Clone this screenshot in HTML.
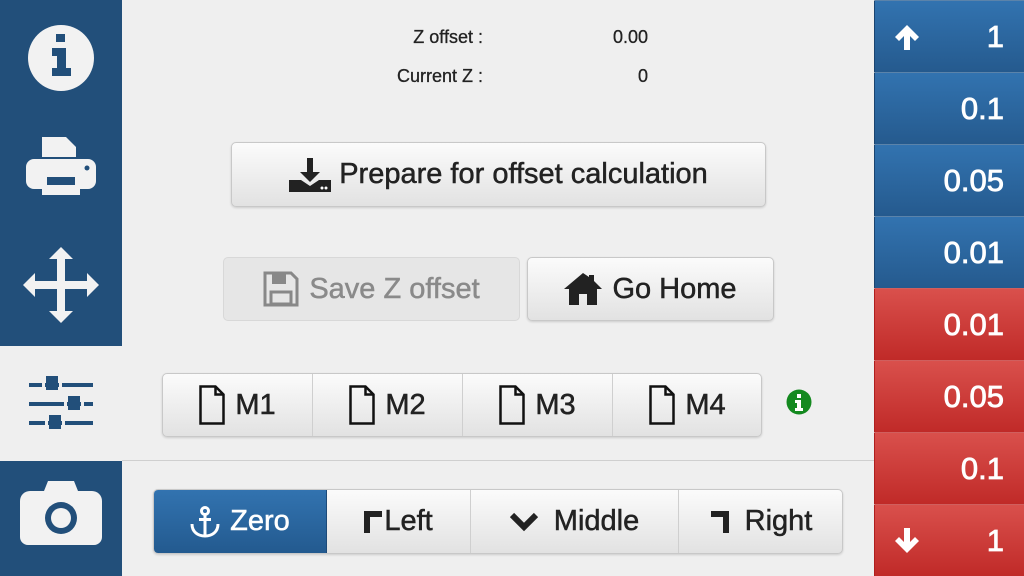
<!DOCTYPE html>
<html><head><meta charset="utf-8"><style>
*{box-sizing:border-box;margin:0;padding:0}
body{width:1024px;height:576px;overflow:hidden;background:#efefef;font-family:"Liberation Sans","DejaVu Sans",sans-serif;position:relative}
.abs{position:absolute}
.side{left:0;top:0;width:122px;height:576px;background:#224f7a}
.act{left:0;top:346px;width:122px;height:115px;background:#efefef}
.sep{left:122px;top:460px;width:752px;height:1px;background:#cfcfcf}
.btn{position:absolute;background:linear-gradient(#fbfbfb,#e2e2e2);border:1px solid #c8c8c8;border-radius:5px;display:flex;align-items:center;justify-content:center;font-size:29px;color:#222;box-shadow:0 1px 2px rgba(0,0,0,.15);-webkit-text-stroke:0.5px}
.seg{position:absolute;display:flex;align-items:center;justify-content:center;font-size:29px;color:#222;border-right:1px solid #cfcfcf;height:100%;top:0}
.r{position:absolute;right:0;width:150px;height:72px;color:#fff;font-size:31px;display:flex;align-items:center;justify-content:flex-end;padding-right:20px;border-left:1px solid #1a4470;border-top:1px solid rgba(255,255,255,.25);-webkit-text-stroke:0.8px}
.b{background:linear-gradient(#3273b0,#255a8e)}
.rd{background:linear-gradient(#d9504c,#c02a28);border-left-color:#b01e1e}
.lbl{font-size:18px;color:#222;-webkit-text-stroke:0.3px}
</style></head><body>
<div class="abs side"></div>
<div class="abs act"></div>
<div class="abs sep"></div>
<svg class="abs" style="left:28px;top:25px" width="66" height="66" viewBox="0 0 66 66"><circle cx="33" cy="33" r="33" fill="#f2f2f2"/><rect x="28" y="9" width="9" height="8" fill="#224f7a"/><path d="M24 23h14v20h5v8H24v-8h5V31h-5z" fill="#224f7a"/></svg>
<svg class="abs" style="left:25px;top:133px" width="72" height="66" viewBox="0 0 72 62"><path d="M17 2h24l10 10v10H17z" fill="#f2f2f2"/><rect x="1" y="24" width="70" height="30" rx="8" fill="#f2f2f2"/><rect x="17" y="46" width="38" height="14" fill="#f2f2f2"/><rect x="22" y="42" width="28" height="8" fill="#224f7a"/><circle cx="62" cy="33" r="2.5" fill="#224f7a"/></svg>
<svg class="abs" style="left:23px;top:247px" width="76" height="76" viewBox="0 0 76 76"><path d="M38 0l12 12h-8v22h22v-8l12 12-12 12v-8H42v22h8L38 76 26 64h8V42H12v8L0 38l12-12v8h22V12h-8z" fill="#f2f2f2"/></svg>
<svg class="abs" style="left:28px;top:372px" width="66" height="62" viewBox="0 0 66 62"><g fill="#224f7a"><rect x="1" y="11" width="64" height="4"/><rect x="1" y="30" width="64" height="4"/><rect x="1" y="49" width="64" height="4"/><rect x="18" y="4" width="12" height="14"/><rect x="40" y="24" width="12" height="14"/><rect x="21" y="43" width="12" height="14"/></g><g fill="#efefef"><rect x="14" y="11" width="3" height="4"/><rect x="31" y="11" width="3" height="4"/><rect x="36" y="30" width="3" height="4"/><rect x="53" y="30" width="3" height="4"/><rect x="17" y="49" width="3" height="4"/><rect x="34" y="49" width="3" height="4"/></g></svg>
<svg class="abs" style="left:20px;top:478px" width="82" height="68" viewBox="0 0 82 66"><path d="M28 2h26l4 10h14a10 10 0 0 1 10 10v36a8 8 0 0 1-8 8H8a8 8 0 0 1-8-8V22a10 10 0 0 1 10-10h14z" fill="#f2f2f2"/><circle cx="41" cy="39" r="16" fill="#224f7a"/><circle cx="41" cy="39" r="10" fill="#f2f2f2"/></svg>
<div class="abs lbl" style="right:541px;top:27px">Z offset :</div>
<div class="abs lbl" style="right:376px;top:27px">0.00</div>
<div class="abs lbl" style="right:541px;top:66px">Current Z :</div>
<div class="abs lbl" style="right:376px;top:66px">0</div>
<div class="btn" style="left:231px;top:142px;width:535px;height:65px"><svg width="42" height="34" viewBox="0 0 42 34" style="margin-right:8px"><path d="M18 0h6v14h7l-10 10-10-10h7z" fill="#222"/><path d="M0 22h12l9 6 9-6h12v12H0z" fill="#222"/><circle cx="33" cy="30" r="1.5" fill="#fff"/><circle cx="37" cy="30" r="1.5" fill="#fff"/></svg>Prepare for offset calculation</div>
<div class="btn" style="left:223px;top:257px;width:297px;height:64px;background:#e6e6e6;color:#8a8a8a;box-shadow:none;border-color:#d8d8d8"><svg width="36" height="36" viewBox="0 0 36 36" style="margin-right:10px"><path d="M2 2h26l6 6v26H2z" fill="none" stroke="#888" stroke-width="3"/><rect x="9" y="3" width="14" height="10" fill="#888"/><rect x="8" y="21" width="20" height="12" fill="none" stroke="#888" stroke-width="3"/></svg>Save Z offset</div>
<div class="btn" style="left:527px;top:257px;width:247px;height:64px"><svg width="38" height="32" viewBox="0 0 38 32" style="margin-right:10px"><path d="M19 0L0 16h5v16h10V21h8v11h10V16h5L30 8V2h-5v2z" fill="#222"/></svg>Go Home</div>
<div class="btn" style="left:162px;top:373px;width:600px;height:64px;display:block">
<div class="seg" style="left:0;width:150px"><svg width="26" height="40" viewBox="0 0 26 40" style="margin-right:10px"><path d="M1.5 1.5h15l8 8v29h-23z M16.5 1.5v8h8" fill="none" stroke="#111" stroke-width="2.5"/></svg>M1</div>
<div class="seg" style="left:150px;width:150px"><svg width="26" height="40" viewBox="0 0 26 40" style="margin-right:10px"><path d="M1.5 1.5h15l8 8v29h-23z M16.5 1.5v8h8" fill="none" stroke="#111" stroke-width="2.5"/></svg>M2</div>
<div class="seg" style="left:300px;width:150px"><svg width="26" height="40" viewBox="0 0 26 40" style="margin-right:10px"><path d="M1.5 1.5h15l8 8v29h-23z M16.5 1.5v8h8" fill="none" stroke="#111" stroke-width="2.5"/></svg>M3</div>
<div class="seg" style="left:450px;width:149px;border-right:none"><svg width="26" height="40" viewBox="0 0 26 40" style="margin-right:10px"><path d="M1.5 1.5h15l8 8v29h-23z M16.5 1.5v8h8" fill="none" stroke="#111" stroke-width="2.5"/></svg>M4</div>
</div>
<svg class="abs" style="left:786px;top:389px" width="26" height="26" viewBox="0 0 26 26"><circle cx="13" cy="13" r="12.5" fill="#14891f"/><rect x="11" y="5" width="4" height="4" fill="#fff"/><path d="M9 11h6v8h2v3H9v-3h2v-5H9z" fill="#fff"/></svg>
<div class="btn" style="left:153px;top:489px;width:690px;height:65px;display:block;overflow:hidden">
<div class="seg" style="left:0;width:173px;background:linear-gradient(#3273b0,#235a8f);color:#fff;border-right:1px solid #1d4a78"><svg width="30" height="32" viewBox="0 0 30 32" style="margin-right:10px"><circle cx="15" cy="5" r="3.5" fill="none" stroke="#fff" stroke-width="3"/><rect x="13.5" y="8" width="3" height="22" fill="#fff"/><rect x="9" y="12" width="12" height="3" fill="#fff"/><path d="M2 18c0 8 6 12 13 12s13-4 13-12" fill="none" stroke="#fff" stroke-width="3"/></svg>Zero</div>
<div class="seg" style="left:173px;width:144px"><svg width="18" height="22" viewBox="0 0 18 22" style="margin-right:2px"><path d="M0 0h18v6H6v16H0z" fill="#222"/></svg>Left</div>
<div class="seg" style="left:317px;width:208px"><svg width="28" height="20" viewBox="0 0 28 20" style="margin-right:16px"><path d="M2 3l12 12L26 3" fill="none" stroke="#222" stroke-width="6"/></svg>Middle</div>
<div class="seg" style="left:525px;width:165px;border-right:none"><svg width="18" height="22" viewBox="0 0 18 22" style="margin-right:16px"><path d="M0 0h18v22h-6V6H0z" fill="#222"/></svg>Right</div>
</div>
<div class="r b" style="top:0"><svg width="28" height="28" viewBox="0 0 28 28" style="position:absolute;left:18px;top:22px"><path d="M14 2L2 14l4 4 5-5v14h6V13l5 5 4-4z" fill="#fff"/></svg>1</div>
<div class="r b" style="top:72px">0.1</div>
<div class="r b" style="top:144px">0.05</div>
<div class="r b" style="top:216px">0.01</div>
<div class="r rd" style="top:288px">0.01</div>
<div class="r rd" style="top:360px">0.05</div>
<div class="r rd" style="top:432px">0.1</div>
<div class="r rd" style="top:504px"><svg width="28" height="28" viewBox="0 0 28 28" style="position:absolute;left:18px;top:22px"><path d="M14 26L2 14l4-4 5 5V1h6v14l5-5 4 4z" fill="#fff"/></svg>1</div>
</body></html>
